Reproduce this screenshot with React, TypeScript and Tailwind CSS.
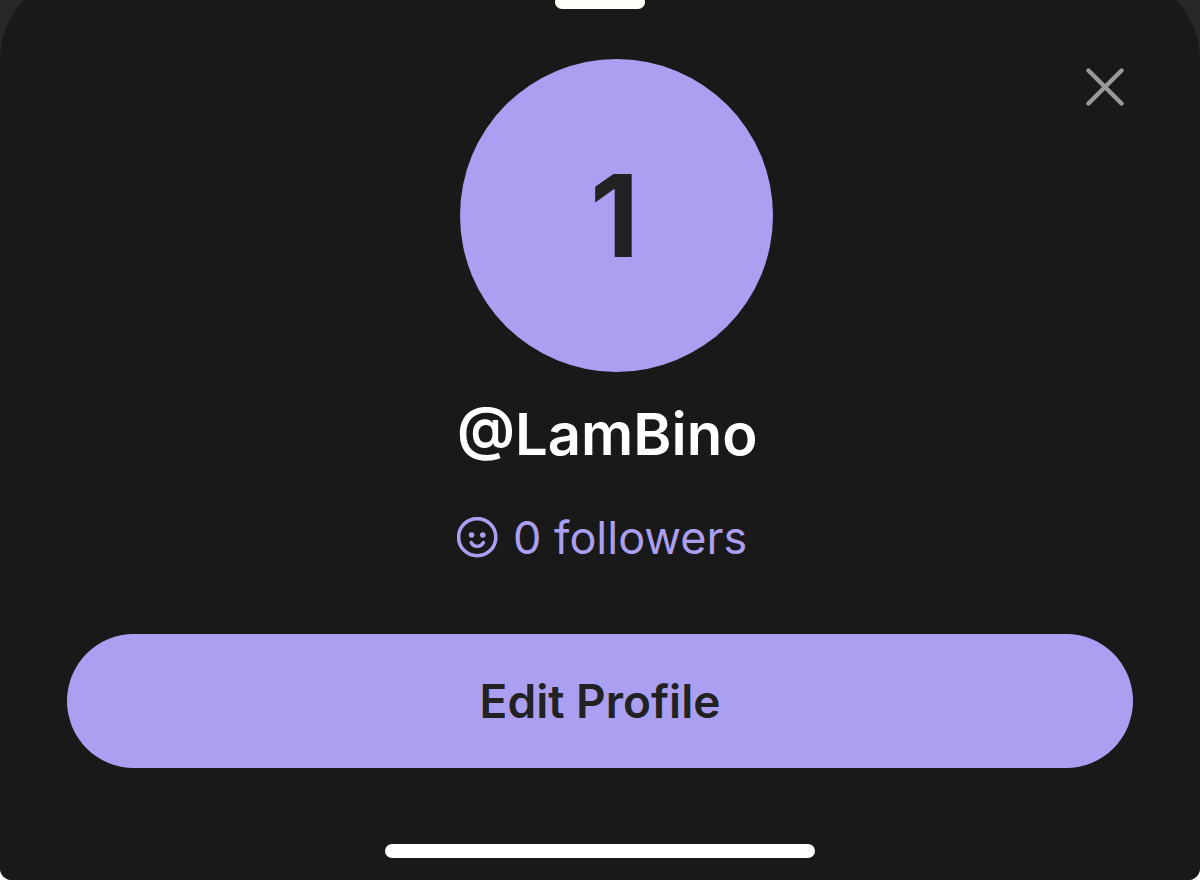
function CloseIcon() {
  return (
    <svg
      viewBox="0 0 38 38"
      className="size-[38px]"
      fill="none"
      stroke="currentColor"
      strokeWidth="4.4"
      strokeLinecap="round"
      aria-hidden="true"
    >
      <path d="M2.5 2.5 35.5 35.5M35.5 2.5 2.5 35.5" />
    </svg>
  );
}

function SmileIcon() {
  return (
    <svg viewBox="0 0 42 42" className="size-[42px] shrink-0" fill="none" aria-hidden="true">
      <circle cx="20.2" cy="20.2" r="18.6" stroke="currentColor" strokeWidth="3.6" />
      <circle cx="14.6" cy="18" r="2.8" fill="currentColor" />
      <circle cx="25.8" cy="18" r="2.8" fill="currentColor" />
      <path
        d="M14.2 25.6C17 30.6 23.6 30.6 26.4 25.6"
        stroke="currentColor"
        strokeWidth="3.4"
        strokeLinecap="round"
      />
    </svg>
  );
}

function ProfileSummary({ handle, followers }: { handle: string; followers: number }) {
  return (
    <section className="flex justify-center pl-[30px]">
      <div className="flex w-[316px] flex-col items-start">
        <div className="flex size-[313px] items-center justify-center self-end rounded-full bg-[#ab9ff2] pr-1 text-[114px] font-bold leading-none text-[#222222]">
          1
        </div>
        <h1 className="mt-[26px] whitespace-nowrap text-[58px] font-semibold leading-[72px] text-white">
          {handle}
        </h1>
        <a
          href="#"
          className="mt-[38px] flex items-center gap-3.5 whitespace-nowrap text-[45px] leading-[60px] text-[#ab9ff2]"
        >
          <SmileIcon />
          {followers} followers
        </a>
      </div>
    </section>
  );
}

export default function App() {
  return (
    <div className="bg-white font-['Inter','Liberation_Sans',sans-serif]">
      <div className="overflow-hidden rounded-b-xl bg-[#28282b]">
        {/* the sheet's top edge runs past the top of the screen */}
        <main className="relative -mt-[29px] flex min-h-[909px] flex-col rounded-t-[90px] bg-[#191919] pt-6">
          <div className="mx-auto h-3.5 w-[90px] rounded-full bg-[#fffffa]" />
          <button
            type="button"
            aria-label="Close"
            className="absolute right-[76px] top-[97px] text-[#999999]"
          >
            <CloseIcon />
          </button>

          <div className="mt-[50px]">
            <ProfileSummary handle="@LamBino" followers={0} />
          </div>

          <button
            type="button"
            className="mx-[67px] mt-[66px] h-[134px] rounded-full bg-[#ab9ff2] text-[46px] font-semibold text-[#222222]"
          >
            Edit Profile
          </button>

          <div className="mx-auto mb-[22px] mt-auto h-3.5 w-[430px] rounded-full bg-white" />
        </main>
      </div>
    </div>
  );
}
